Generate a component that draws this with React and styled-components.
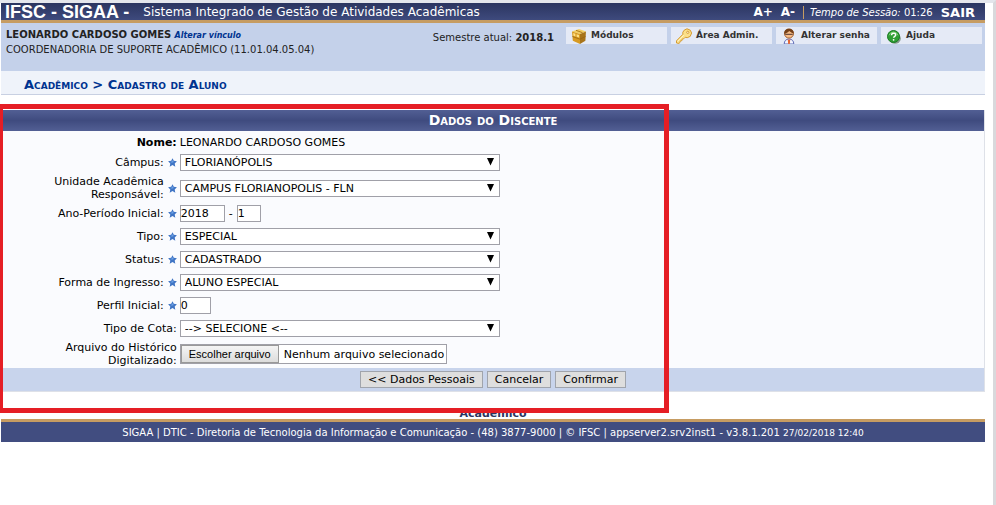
import React from 'react';
import styled, { createGlobalStyle } from 'styled-components';

const GlobalStyle = createGlobalStyle`
  *, *::before, *::after {
    box-sizing: border-box;
  }

  body {
    margin: 0;
    background: #fff;
    color: #222;
    font-family: 'DejaVu Sans', Verdana, sans-serif;
    font-size: 11px;
    line-height: 15px;
  }
`;

const Page = styled.div`
  min-height: 100vh;
  padding: 0 8px 0 1px;
  border-top: 3px solid #e4e6ec;
  border-right: 3px solid #d9d9dc;
`;

const Header = styled.header`
  display: flex;
  align-items: center;
  height: 20px;
  padding: 1px 10px 0 4px;
  border-bottom: 3px solid #c69c62;
  background: linear-gradient(#2b3560, #3e4a7d);
  color: #fff;
  white-space: nowrap;
`;

const Brand = styled.h1`
  margin: 0 14px 0 0;
  font-family: 'Liberation Sans', Arial, sans-serif;
  font-size: 18px;
  line-height: 16px;
`;

const SystemName = styled.span`
  flex: 1;
  font-size: 12px;
`;

const FontButton = styled.button`
  margin-right: 8px;
  padding: 0;
  border: 0;
  background: none;
  color: #fff;
  font: bold 12px/15px 'DejaVu Sans', Verdana, sans-serif;
`;

const Session = styled.span`
  padding-left: 6px;
  border-left: 1px solid #c69c62;
  font-size: 10px;
  line-height: 13px;
`;

const Exit = styled.a`
  margin-left: 8px;
  color: #fff;
  font-size: 13px;
  font-weight: bold;
  text-decoration: none;
`;

const UserPanel = styled.section`
  display: flex;
  min-height: 48px;
  padding: 4px 3px 0 5px;
  background: #c4d1ea;
  font-size: 10px;
  white-space: nowrap;
`;

const UserInfo = styled.div`
  flex: 1;
`;

const RoleLink = styled.a`
  color: #003390;
  font-size: 8px;
  font-style: italic;
  font-weight: bold;
  line-height: 10px;
  text-decoration: none;
`;

const Semester = styled.div`
  margin: 3px 12px 0 0;
`;

const Menu = styled.nav`
  display: flex;
  align-items: flex-start;
  gap: 4px;
`;

const MenuLink = styled.a`
  display: flex;
  align-items: center;
  gap: 4px;
  width: 101px;
  height: 17px;
  padding-left: 5px;
  background: #e5eaf6;
  color: #333;
  font-size: 9px;
  font-weight: bold;
  text-decoration: none;

  svg {
    flex: none;
    align-self: flex-start;
    margin-top: 1px;
  }
`;

const Breadcrumb = styled.h2`
  margin: 0;
  padding: 6px 23px 2px;
  border-bottom: 1px solid #c8d0e2;
  background: #eff3fa;
  color: #003390;
  font-size: 13px;
  font-variant: small-caps;
  line-height: 15px;
`;

const Content = styled.main`
  position: relative;
  margin-top: 15px;
`;

const Form = styled.form`
  border: solid #dee1e8;
  border-width: 0 1px 1px;
  background: #fafbfe;
  color: #000;
`;

const FormTitle = styled.h3`
  margin: 0;
  background: linear-gradient(#525f94, #3f4b7f 50%, #525f94);
  color: #fff;
  font-size: 14px;
  font-variant: small-caps;
  line-height: 21px;
  text-align: center;
`;

const Row = styled.div`
  display: flex;
  align-items: center;
  min-height: ${({ $tall }) => ($tall ? 28 : 23)}px;
`;

const NameRow = styled(Row)`
  min-height: 20px;
  padding-top: 2px;
`;

const LabelCell = styled.div`
  display: flex;
  align-items: center;
  justify-content: flex-end;
  gap: 4px;
  width: 18%;
  padding-right: 2px;
  line-height: 13px;
  text-align: right;
`;

const Value = styled.div`
  display: flex;
  align-items: center;
  gap: 4px;
  padding-left: 1px;
`;

const SelectBox = styled.div`
  position: relative;

  svg {
    position: absolute;
    top: 4px;
    right: 6px;
    pointer-events: none;
  }
`;

const Select = styled.select`
  display: block;
  width: 320px;
  height: 17px;
  padding: 0 20px 0 4px;
  border: 1px solid #a0a0a8;
  border-radius: 0;
  appearance: none;
  background: #fff;
  color: #000;
  font: 11px/15px 'DejaVu Sans', Verdana, sans-serif;
`;

const Input = styled.input`
  width: ${({ $width }) => $width}px;
  height: 17px;
  padding: 0;
  border: 1px solid #a0a0a8;
  background: #fff;
  color: #000;
  font: 11px/15px 'DejaVu Sans', Verdana, sans-serif;
`;

const FileBox = styled.div`
  position: relative;
  display: flex;
  align-items: center;
  gap: 5px;
  padding-right: 2px;
  border: 1px solid #a0a0a8;
  background: #fff;
  white-space: nowrap;

  input {
    position: absolute;
    inset: 0;
    width: 100%;
    opacity: 0;
  }
`;

const FileButton = styled.span`
  padding: 0 7px;
  border: 1px solid #999;
  background: linear-gradient(#f4f4f4, #dcdcdc);
  font-family: 'Liberation Sans', Arial, sans-serif;
  font-size: 11px;
  line-height: 16px;
`;

const Actions = styled.div`
  display: flex;
  justify-content: center;
  gap: 4px;
  padding: 3px;
  background: #c8d4ec;
`;

const ActionButton = styled.button`
  height: 17px;
  padding: 0 7px;
  border: 1px solid #a0a4ac;
  background: #dedede;
  color: #000;
  font: 11px/15px 'DejaVu Sans', Verdana, sans-serif;
`;

const Highlight = styled.div`
  position: absolute;
  top: -6px;
  bottom: -21px;
  left: -1px;
  width: 68%;
  border: 5px solid #e51e25;
  border-left-width: 3px;
  pointer-events: none;
`;

const ModuleLink = styled.div`
  padding-top: 16px;
  line-height: 11px;
  text-align: center;

  a {
    color: #2b3560;
    font-weight: bold;
    text-decoration: none;
  }
`;

const Footer = styled.footer`
  padding: 3px 0 2px;
  border-top: 3px solid #c69c62;
  background: #414d80;
  color: #fff;
  font-size: 10px;
  text-align: center;
  white-space: nowrap;

  small {
    font-size: 9px;
    line-height: 10px;
  }
`;

const BoxIcon = () => (
  <svg width="16" height="16" viewBox="0 0 16 16" aria-hidden="true">
    <path d="M1 3.5 8 1l7 2.5-6 2.6z" fill="#f3cf62" />
    <path d="M1 3.5 9 6.1V16l-7.2-3.2z" fill="#d79a22" />
    <path d="m15 3.5-6 2.6V16l5.4-3.2z" fill="#a8741a" />
    <path d="m1.4 8.5 7.6 2.7 5.6-2.8M5 2.3l6.5 2.4" fill="none" stroke="#9a6512" strokeWidth=".8" />
    <path d="m2.2 5 2.2.8v2.6L2.4 7.7zM5.6 6.2 8 7v2.5l-2.4-.8z" fill="#ffe186" />
  </svg>
);

const KeyIcon = () => (
  <svg width="16" height="16" viewBox="0 0 16 16" aria-hidden="true">
    <path
      d="M8.2 2.2 11 .8l3.3 1.4L15.6 5l-1.4 3.4-3 1.3-2-.4-1.5 1.5-1.5.2-.3 1.7-1.6.2-.4 1.7L3 15.4.5 15v-2.2l6.4-6.5-.1-2z"
      fill="#fbe08a"
      stroke="#d59b32"
    />
    <path d="m1.5 13.4 6.3-6.2" stroke="#fff6c8" />
    <circle cx="11.8" cy="4.3" r="1.1" fill="#fff" stroke="#d59b32" />
  </svg>
);

const UserIcon = () => (
  <svg width="16" height="16" viewBox="0 0 16 16" aria-hidden="true">
    <path d="M3.2 16c0-3 1.8-5 4.8-5s4.8 2 4.8 5z" fill="#f4f6ff" stroke="#606db7" />
    <circle cx="8" cy="5.6" r="4.5" fill="#f8bc86" stroke="#a4602f" />
    <path d="M3.3 6C3 2.4 5 .7 8 .7s5 1.7 4.7 5.1C11 5 9.5 4 8.2 3.1 7 4.4 5.2 5.4 3.3 6z" fill="#754018" />
    <path d="M4.2 6.3h7.5" stroke="#4e3430" />
    <path d="m6.7 11 1.3 1.1L9.3 11l-.5 5H7.2z" fill="#e36432" />
  </svg>
);

const HelpIcon = () => (
  <svg width="16" height="16" viewBox="0 0 16 16" aria-hidden="true">
    <ellipse cx="9" cy="10.5" rx="5.8" ry="5.2" fill="#86998c" />
    <circle cx="7.5" cy="8.5" r="6" fill="#2f9e34" stroke="#197b23" />
    <path d="M3 7.4a4.7 4.7 0 0 1 9 0" fill="none" stroke="#83d278" />
    <path d="M5.5 7.3c0-3 4.4-2.7 4.2-.3C9.6 8.4 7.7 8.2 7.6 9.8" fill="none" stroke="#fff" strokeWidth="1.5" />
    <circle cx="7.6" cy="11.8" r=".9" fill="#fff" />
  </svg>
);

const RequiredStar = () => (
  <svg width="9" height="9" viewBox="0 0 9 9" role="img" aria-label="Obrigatório">
    <path d="m4.5.2 1.3 2.6 3.1.4-2.2 2.2.6 3.3-2.8-1.6-2.8 1.6.6-3.3L.1 3.2l3.1-.4z" fill="#3f74c4" />
    <path d="m4.5 2 .6 1.6 1.2.2-1.4.7-1.9.1-.9-.9 1.8-.1z" fill="#6fa3e6" />
  </svg>
);

const menuItems = [
  { label: 'Módulos', icon: <BoxIcon /> },
  { label: 'Área Admin.', icon: <KeyIcon /> },
  { label: 'Alterar senha', icon: <UserIcon /> },
  { label: 'Ajuda', icon: <HelpIcon /> },
];

const Field = ({ id, label, required, tall, children }) => (
  <Row $tall={tall}>
    <LabelCell>
      <label htmlFor={id}>{label}</label>
      {required && <RequiredStar />}
    </LabelCell>
    <Value>{children}</Value>
  </Row>
);

const SelectField = ({ id, value, ...props }) => (
  <Field id={id} {...props}>
    <SelectBox>
      <Select id={id}>
        <option>{value}</option>
      </Select>
      <svg width="7" height="8" viewBox="0 0 7 8" aria-hidden="true">
        <path d="M0 0h7L3.5 7.5z" fill="#000" />
      </svg>
    </SelectBox>
  </Field>
);

const App = () => (
  <>
    <GlobalStyle />
    <Page>
      <Header>
        <Brand>IFSC - SIGAA -</Brand>
        <SystemName>Sistema Integrado de Gestão de Atividades Acadêmicas</SystemName>
        <FontButton type="button">A+</FontButton>
        <FontButton type="button">A-</FontButton>
        <Session>
          <em>Tempo de Sessão:</em> 01:26
        </Session>
        <Exit href="#sair">SAIR</Exit>
      </Header>

      <UserPanel>
        <UserInfo>
          <strong>LEONARDO CARDOSO GOMES</strong> <RoleLink href="#vinculo">Alterar vínculo</RoleLink>
          <div>COORDENADORIA DE SUPORTE ACADÊMICO (11.01.04.05.04)</div>
        </UserInfo>
        <Semester>
          Semestre atual: <strong>2018.1</strong>
        </Semester>
        <Menu>
          {menuItems.map(({ label, icon }) => (
            <MenuLink key={label} href="#menu">
              {icon}
              {label}
            </MenuLink>
          ))}
        </Menu>
      </UserPanel>

      <Breadcrumb>Acadêmico &gt; Cadastro de Aluno</Breadcrumb>

      <Content>
        <Form onSubmit={(e) => e.preventDefault()}>
          <FormTitle>Dados do Discente</FormTitle>
          <NameRow>
            <LabelCell>
              <strong>Nome:</strong>
            </LabelCell>
            <Value>LEONARDO CARDOSO GOMES</Value>
          </NameRow>
          <SelectField id="campus" label="Câmpus:" value="FLORIANÓPOLIS" required />
          <SelectField
            id="unidade"
            label={<>Unidade Acadêmica<br />Responsável:</>}
            value="CAMPUS FLORIANOPOLIS - FLN"
            required
            tall
          />
          <Field id="ano" label="Ano-Período Inicial:" required>
            <Input id="ano" $width={45} defaultValue="2018" />
            -
            <Input aria-label="Período" $width={24} defaultValue="1" />
          </Field>
          <SelectField id="tipo" label="Tipo:" value="ESPECIAL" required />
          <SelectField id="status" label="Status:" value="CADASTRADO" required />
          <SelectField id="ingresso" label="Forma de Ingresso:" value="ALUNO ESPECIAL" required />
          <Field id="perfil" label="Perfil Inicial:" required>
            <Input id="perfil" $width={31} defaultValue="0" />
          </Field>
          <SelectField id="cota" label="Tipo de Cota:" value="--> SELECIONE <--" />
          <Field id="historico" label={<>Arquivo do Histórico<br />Digitalizado:</>} tall>
            <FileBox>
              <FileButton>Escolher arquivo</FileButton>
              <span>Nenhum arquivo selecionado</span>
              <input id="historico" type="file" />
            </FileBox>
          </Field>
          <Actions>
            <ActionButton type="button">&lt;&lt; Dados Pessoais</ActionButton>
            <ActionButton type="button">Cancelar</ActionButton>
            <ActionButton type="submit">Confirmar</ActionButton>
          </Actions>
        </Form>
        <Highlight />
      </Content>

      <ModuleLink>
        <a href="#academico">Acadêmico</a>
      </ModuleLink>
      <Footer>
        SIGAA | DTIC - Diretoria de Tecnologia da Informação e Comunicação - (48) 3877-9000 | © IFSC |
        appserver2.srv2inst1 - v3.8.1.201 <small>27/02/2018 12:40</small>
      </Footer>
    </Page>
  </>
);

export default App;
